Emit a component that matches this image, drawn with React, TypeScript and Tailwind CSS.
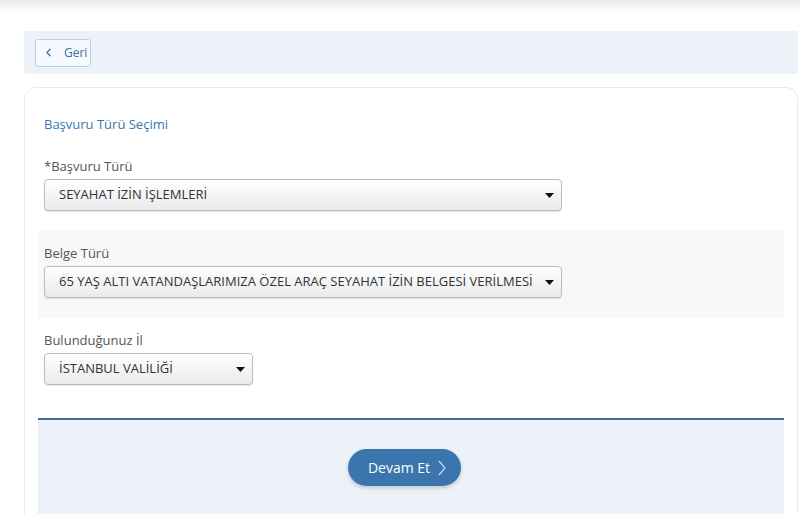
import { ChevronLeft } from 'lucide-react'

function Caret() {
    return (
        <svg width="9" height="5" viewBox="0 0 9 5" className="shrink-0">
            <path d="M0 0h9L4.5 5z" fill="#111" />
        </svg>
    )
}

function SelectBox({ value, width }: { value: string; width: string }) {
    return (
        <div
            className={`${width} h-[32px] mt-[4px] flex items-center justify-between pl-[14px] pr-[7px] rounded-[4px] border border-[#bcbcbc] bg-gradient-to-b from-white to-[#e9eaec] shadow-[0_1px_1px_rgba(0,0,0,0.12)] text-[13px] text-[#333]`}
        >
            <span className="truncate">{value}</span>
            <Caret />
        </div>
    )
}

function Field({ label, value, width, className }: { label: string; value: string; width: string; className?: string }) {
    return (
        <div className={`px-[6px] pb-[20px] ${className ?? ''}`}>
            <div className="text-[13px] leading-[17px] text-[#555]">{label}</div>
            <SelectBox value={value} width={width} />
        </div>
    )
}

export default function App() {
    return (
        <div className="min-h-screen bg-white font-['Open_Sans',sans-serif] overflow-hidden">
            <div className="h-[12px] bg-gradient-to-b from-[#ebebeb] to-white" />

            <div className="pt-[19px] pl-[24px] pr-[2px]">
                <div className="h-[43px] bg-[#edf1f8] rounded-[3px] flex items-center px-[11px]">
                    <button className="h-[28px] w-[56px] flex items-center gap-[9px] pl-[6px] rounded-[3px] border border-[#bdd0e6] bg-[#f6f9fd] text-[12px] text-[#3a6fa8]">
                        <ChevronLeft className="w-[13px] h-[13px]" strokeWidth={2.25} />
                        Geri
                    </button>
                </div>

                <div className="mt-[13px] border border-[#e9e9e9] rounded-[12px] px-[13px] pt-[27px] min-h-[440px]">
                    <div className="px-[6px] text-[13px] leading-[18px] text-[#3b76ae]">Başvuru Türü Seçimi</div>

                    <Field label="*Başvuru Türü" value="SEYAHAT İZİN İŞLEMLERİ" width="w-[518px]" className="pt-[25px]" />
                    <Field
                        label="Belge Türü"
                        value="65 YAŞ ALTI VATANDAŞLARIMIZA ÖZEL ARAÇ SEYAHAT İZİN BELGESİ VERİLMESİ"
                        width="w-[518px]"
                        className="pt-[14px] bg-[#f7f8fa]"
                    />
                    <Field label="Bulunduğunuz İl" value="İSTANBUL VALİLİĞİ" width="w-[209px]" className="pt-[14px]" />

                    <div className="mt-[13px] border-t-2 border-[#3c6fa3] bg-[#edf1f8] rounded-b-[4px] pt-[29px] pb-[40px] flex justify-center pr-[14px]">
                        <button className="h-[37px] w-[113px] rounded-full bg-[#3a75ad] text-white text-[14px] flex items-center justify-center gap-[8px] pl-[6px] shadow-[0_2px_4px_rgba(0,0,0,0.18)]">
                            Devam Et
                            <svg width="8" height="16" viewBox="0 0 8 16" fill="none">
                                <path d="M1 1l6 7-6 7" stroke="#c9daee" strokeWidth="1.2" />
                            </svg>
                        </button>
                    </div>
                </div>
            </div>
        </div>
    )
}
